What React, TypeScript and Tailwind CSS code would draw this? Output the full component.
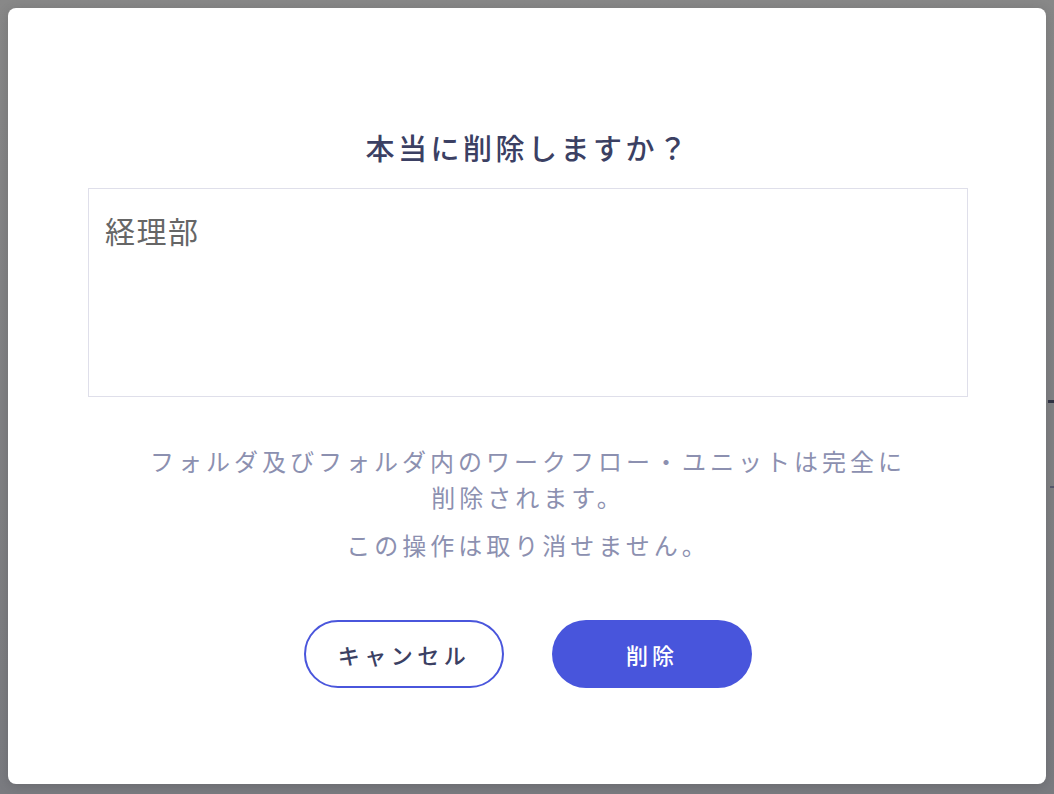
const jp = '"Noto Sans CJK JP", "Noto Sans", sans-serif';

function DeleteConfirmModal() {
  return (
    <div
      className="flex flex-col items-center rounded-[8px] bg-white pl-[80px] pr-[78px] pt-[118px] pb-[96px] shadow-[0_2px_12px_rgba(0,0,0,0.15)]"
      style={{ fontFamily: jp }}
    >
      <h2 className="text-[29px] leading-[42px] font-medium tracking-[3.5px] text-[#3b4063]">
        本当に削除しますか？
      </h2>

      <div className="mt-[20px] h-[209px] w-full border border-[#dfdfea] px-[16px] pt-[20px]">
        <p className="text-[30px] leading-[42px] tracking-[1.5px] text-[#666666]">経理部</p>
      </div>

      <div className="mt-[46px] w-[770px] text-center text-[24px] leading-[36px] tracking-[4px] text-[#8c90b0]">
        <p>フォルダ及びフォルダ内のワークフロー・ユニットは完全に削除されます。</p>
        <p className="mt-3">この操作は取り消せません。</p>
      </div>

      <div className="mt-[57px] flex gap-[48px]">
        <button className="h-[68px] w-[200px] rounded-full border-2 border-[#4a56dc] bg-white text-[22px] font-medium tracking-[4.5px] text-[#3b4063]">
          キャンセル
        </button>
        <button className="h-[68px] w-[200px] rounded-full bg-[#4855dc] text-[22px] font-medium tracking-[4px] text-white">
          削除
        </button>
      </div>
    </div>
  );
}

export default function App() {
  return (
    <div className="relative h-[794px] w-[1054px] overflow-hidden bg-gradient-to-b from-[#888888] to-[#7a7b80] p-2">
      <div className="absolute right-0 top-[400px] h-[3px] w-[6px] bg-[#2f3142]" />
      <div className="absolute right-0 top-[486px] h-[2px] w-[4px] bg-[#55566a]" />
      <DeleteConfirmModal />
    </div>
  );
}
